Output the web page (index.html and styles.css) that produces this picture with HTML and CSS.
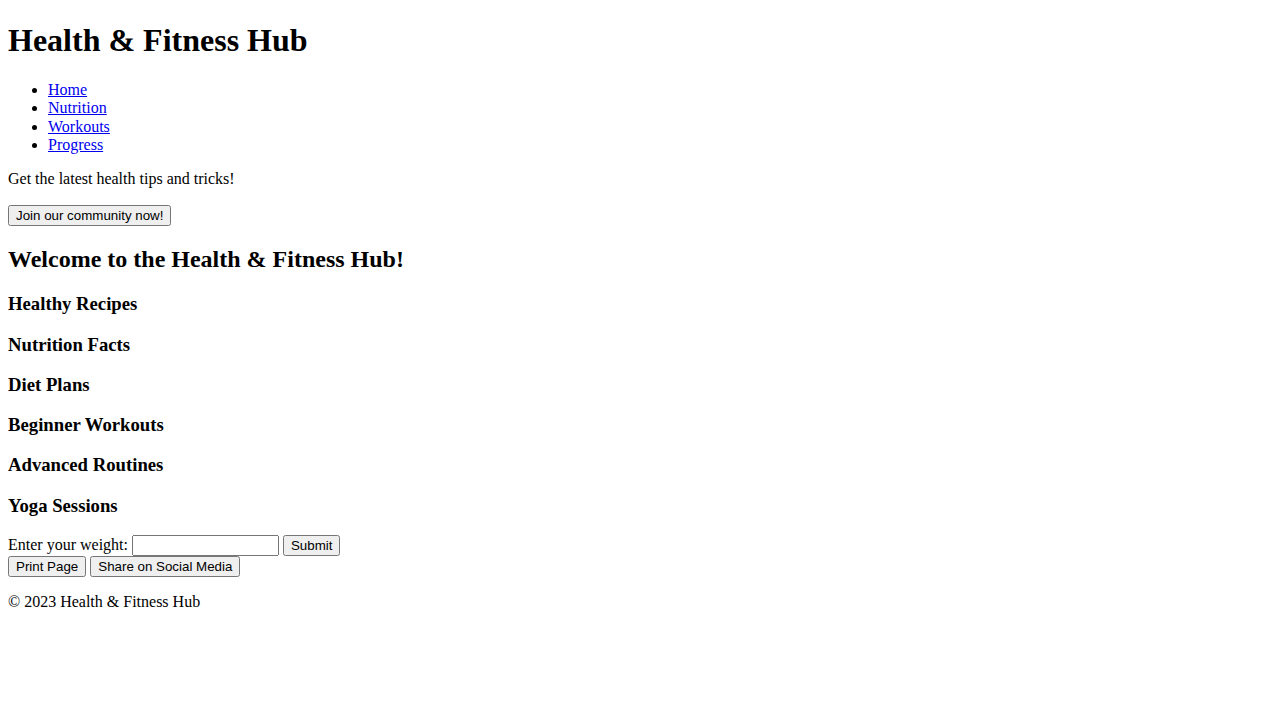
FILE: index.html
```html
<!DOCTYPE html>
<html lang="en">
<head>
<meta charset="utf-8">
<title>Health &amp; Fitness Hub</title>
<link rel="stylesheet" href="styles.css">
</head>
<body class="page">
<header class="site-header">
  <h1>Health &amp; Fitness Hub</h1>
  <nav class="site-nav">
    <ul>
      <li><a href="#">Home</a></li>
      <li><a href="#">Nutrition</a></li>
      <li><a href="#">Workouts</a></li>
      <li><a href="#">Progress</a></li>
    </ul>
  </nav>
</header>
<aside class="promo">
  <p>Get the latest health tips and tricks!</p>
  <button class="btn" type="button">Join our community now!</button>
</aside>
<main class="content">
  <h2>Welcome to the Health &amp; Fitness Hub!</h2>
  <section class="topic">
    <h3>Healthy Recipes</h3>
    <h3>Nutrition Facts</h3>
    <h3>Diet Plans</h3>
  </section>
  <section class="topic">
    <h3>Beginner Workouts</h3>
    <h3>Advanced Routines</h3>
    <h3>Yoga Sessions</h3>
  </section>
  <form class="weight-form">
    <label for="weight">Enter your weight:</label>
    <input id="weight" class="field" type="text">
    <button class="btn" type="button">Submit</button>
  </form>
  <div class="actions">
    <button class="btn" type="button">Print Page</button>
    <button class="btn" type="button">Share on Social Media</button>
  </div>
</main>
<footer class="site-footer">
  <p>&copy; 2023 Health &amp; Fitness Hub</p>
</footer>
</body>
</html>
```
FILE: styles.css
```css
.page {
  margin: 0 8px 8px;
  padding-top: 1px;
  font-family: "Liberation Serif", "Times New Roman", serif;
  line-height: 1.152;
}

.site-header h1 {
  font-size: 32px;
  margin: 21.44px 0;
}

.weight-form {
  line-height: 1;
}

.btn,
.field {
  font-family: "Liberation Sans", Arial, sans-serif;
  font-size: 13.33px;
}

.field {
  box-sizing: border-box;
  width: 147px;
  height: 21px;
}
```
